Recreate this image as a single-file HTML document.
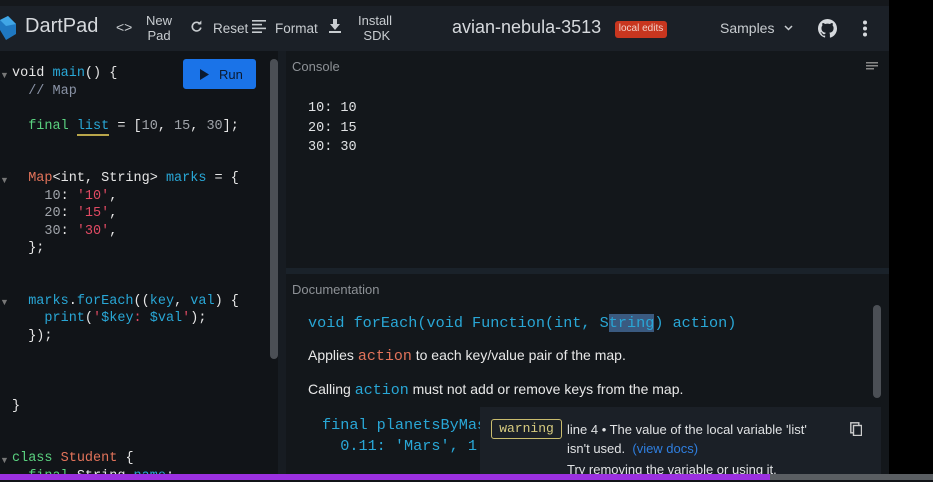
<!DOCTYPE html>
<html><head><meta charset="utf-8"><style>
*{margin:0;padding:0;box-sizing:border-box}
html,body{width:933px;height:482px;overflow:hidden}
body{background:#000;position:relative;font-family:"Liberation Sans",sans-serif}
.a{position:absolute;white-space:pre}
.m{font-family:"Liberation Mono",monospace}
.code{font-size:13.5px;color:#e6e6e6}
.kw{color:#5ad17f}.fn{color:#29a7d6}.ty{color:#e2735a}.cm{color:#8a93a6}.nu{color:#a0a4aa}.st{color:#e04a63}
.ar{position:absolute;left:0;color:#777;font-size:9px}
</style></head><body>
<div class="a" style="left:0;top:0;width:889px;height:6px;background:#15181c"></div>
<div class="a" style="left:0;top:6px;width:889px;height:45px;background:#1b2027"></div>
<svg class="a" style="left:0;top:16px" width="18" height="24" viewBox="0 0 18 24"><path d="M0 4 L8 0 L16 8 L16 18 L6 24 L0 14Z" fill="#1f78c1"/><path d="M0 4 L8 0 L16 8 L6 10Z" fill="#40a6e6"/></svg>
<div class="a" style="left:25px;top:15px;font-size:20px;color:#d6d9dd">DartPad</div>
<div class="a" style="left:116px;top:19px;font-size:14px;color:#c8ccd0">&lt;&gt;</div>
<div class="a" style="left:146px;top:13px;font-size:13px;color:#c8ccd0;text-align:center;line-height:15px">New
Pad</div>
<svg class="a" style="left:190px;top:20px" width="13" height="13" viewBox="0 0 24 24"><path d="M19 8A8 8 0 1 0 20 14" fill="none" stroke="#c8ccd0" stroke-width="3"/><path d="M14 8h7V1z" fill="#c8ccd0"/></svg>
<div class="a" style="left:213px;top:21px;font-size:13.5px;color:#c8ccd0">Reset</div>
<svg class="a" style="left:252px;top:20px" width="14" height="13"><g fill="#c8ccd0"><rect y="0" width="14" height="1.6"/><rect y="3.8" width="10" height="1.6"/><rect y="7.6" width="14" height="1.6"/><rect y="11.4" width="10" height="1.6"/></g></svg>
<div class="a" style="left:275px;top:21px;font-size:13.5px;color:#c8ccd0">Format</div>
<svg class="a" style="left:329px;top:19px" width="12" height="14"><path d="M4 0h4v5h3l-5 6-5-6h3z M0 12h12v2H0z" fill="#c8ccd0"/></svg>
<div class="a" style="left:358px;top:13px;font-size:13px;color:#c8ccd0;text-align:center;line-height:15px">Install
 SDK</div>
<div class="a" style="left:452px;top:17px;font-size:18px;color:#d6d9dd">avian-nebula-3513</div>
<div class="a" style="left:615px;top:21px;width:52px;height:17px;background:#c8361f;border-radius:3px;font-size:10px;color:#f2d0c8;text-align:center;line-height:16px">local edits</div>
<div class="a" style="left:720px;top:20px;font-size:14px;color:#c8ccd0">Samples</div>
<svg class="a" style="left:784px;top:25px" width="9" height="6"><path d="M1 1l3.5 3.5L8 1" stroke="#c8ccd0" stroke-width="1.5" fill="none"/></svg>
<svg class="a" style="left:818px;top:19px" width="19" height="19" viewBox="0 0 16 16"><path fill="#d6d9dd" d="M8 0C3.58 0 0 3.58 0 8c0 3.54 2.29 6.53 5.47 7.59.4.07.55-.17.55-.38v-1.33c-2.23.48-2.7-1.07-2.7-1.07-.36-.92-.89-1.17-.89-1.17-.73-.5.06-.49.06-.49.8.06 1.23.83 1.23.83.72 1.23 1.88.87 2.34.67.07-.52.28-.87.51-1.07-1.78-.2-3.65-.89-3.65-3.95 0-.87.31-1.59.82-2.15-.08-.2-.36-1.02.08-2.12 0 0 .67-.21 2.2.82a7.6 7.6 0 0 1 4 0c1.53-1.04 2.2-.82 2.2-.82.44 1.1.16 1.92.08 2.12.51.56.82 1.27.82 2.15 0 3.07-1.87 3.75-3.65 3.95.29.25.54.73.54 1.48v2.2c0 .21.15.46.55.38A8.01 8.01 0 0 0 16 8c0-4.42-3.58-8-8-8z"/></svg>
<svg class="a" style="left:862px;top:20px" width="6" height="17"><circle cx="3" cy="2.5" r="2" fill="#d6d9dd"/><circle cx="3" cy="8.5" r="2" fill="#d6d9dd"/><circle cx="3" cy="14.5" r="2" fill="#d6d9dd"/></svg>

<div class="a" style="left:0;top:51px;width:278px;height:431px;background:#111418"></div>
<div class="a" style="left:278px;top:51px;width:8px;height:431px;background:#171c22"></div>
<div class="a" style="left:270px;top:59px;width:8px;height:300px;background:#4b4f55;border-radius:4px"></div>
<div class="a" style="left:183px;top:59px;width:73px;height:30px;background:#1a73e8;border-radius:3px"></div>
<svg class="a" style="left:200px;top:69px" width="9" height="11"><path d="M0 0L9 5.5 0 11z" fill="#0b1a30"/></svg>
<div class="a" style="left:219px;top:67px;font-size:13px;color:#0b1a30">Run</div>

<div class="ar" style="top:70px">▼</div>
<div class="ar" style="top:175px">▼</div>
<div class="ar" style="top:297px">▼</div>
<div class="ar" style="top:455px">▼</div>
<div class="a m code" style="left:12px;top:65px;line-height:17.5px">void <span class="fn">main</span>() {
  <span class="cm">// Map</span>

  <span class="kw">final</span> <span class="fn" style="border-bottom:2px solid #b8a54a">list</span> = [<span class="nu">10</span>, <span class="nu">15</span>, <span class="nu">30</span>];


  <span class="ty">Map</span>&lt;int, String&gt; <span class="fn">marks</span> = {
    <span class="nu">10</span>: <span class="st">'10'</span>,
    <span class="nu">20</span>: <span class="st">'15'</span>,
    <span class="nu">30</span>: <span class="st">'30'</span>,
  };


  <span class="fn">marks</span>.<span class="fn">forEach</span>((<span class="fn">key</span>, <span class="fn">val</span>) {
    <span class="fn">print</span>(<span class="st">'</span><span class="fn">$key</span><span class="st">: </span><span class="fn">$val</span><span class="st">'</span>);
  });



}


<span class="kw">class</span> <span class="ty">Student</span> {
  <span class="kw">final</span> String <span class="fn">name</span>;</div>

<div class="a" style="left:286px;top:51px;width:603px;height:217px;background:#13171b"></div>
<div class="a" style="left:292px;top:59px;font-size:13px;color:#8d9196">Console</div>
<svg class="a" style="left:866px;top:62px" width="12" height="9"><g fill="#888"><rect width="12" height="1.5"/><rect y="3" width="12" height="1.5"/><rect y="6" width="8" height="1.5"/></g></svg>
<div class="a m" style="left:308px;top:99px;font-size:13.5px;line-height:19.5px;color:#e0e2e4">10: 10
20: 15
30: 30</div>
<div class="a" style="left:286px;top:268px;width:603px;height:6px;background:#1a222a"></div>
<div class="a" style="left:286px;top:274px;width:603px;height:208px;background:#13171b"></div>
<div class="a" style="left:292px;top:282px;font-size:13px;color:#8d9196">Documentation</div>
<div class="a" style="left:873px;top:305px;width:8px;height:93px;background:#4b4f55;border-radius:4px"></div>
<div class="a m" style="left:308px;top:314px;font-size:15.2px;color:#29a7d6">void forEach(void Function(int, S<span style="background:#3a5a80">tring</span>) action)</div>
<div class="a" style="left:308px;top:347px;font-size:14px;color:#e8e8e8">Applies <span class="m" style="color:#e2735a;font-size:15px">action</span> to each key/value pair of the map.</div>
<div class="a" style="left:308px;top:381px;font-size:14px;color:#e8e8e8">Calling <span class="m" style="color:#29a7d6;font-size:15px">action</span> must not add or remove keys from the map.</div>
<div class="a m" style="left:322px;top:415px;font-size:15.2px;color:#29a7d6;line-height:21px">final planetsByMass
  0.11: 'Mars', 1</div>

<div class="a" style="left:480px;top:407px;width:401px;height:75px;background:#1b2027"></div>
<div class="a m" style="left:491px;top:419px;width:71px;height:20px;border:1px solid #c9bc6e;border-radius:3px;font-size:13px;color:#d8cc80;text-align:center;line-height:18px">warning</div>
<div class="a" style="left:567px;top:420px;font-size:13px;color:#e0e2e4;line-height:19px">line 4 • The value of the local variable 'list'
isn't used.  <span style="color:#2f7fe0">(view docs)</span></div>
<div class="a" style="left:567px;top:462px;font-size:13px;color:#e0e2e4">Try removing the variable or using it.</div>
<svg class="a" style="left:850px;top:422px" width="12" height="14"><rect x="0.8" y="0.8" width="8" height="10" fill="none" stroke="#ccc" stroke-width="1.4"/><rect x="3.5" y="3.5" width="8" height="10" fill="#1b2027" stroke="#ccc" stroke-width="1.4"/></svg>

<div class="a" style="left:0;top:474px;width:770px;height:6px;background:#9b30e0"></div>
<div class="a" style="left:770px;top:474px;width:163px;height:6px;background:#5a5e62"></div>
<div class="a" style="left:0;top:480px;width:933px;height:2px;background:#111418"></div>
</body></html>
